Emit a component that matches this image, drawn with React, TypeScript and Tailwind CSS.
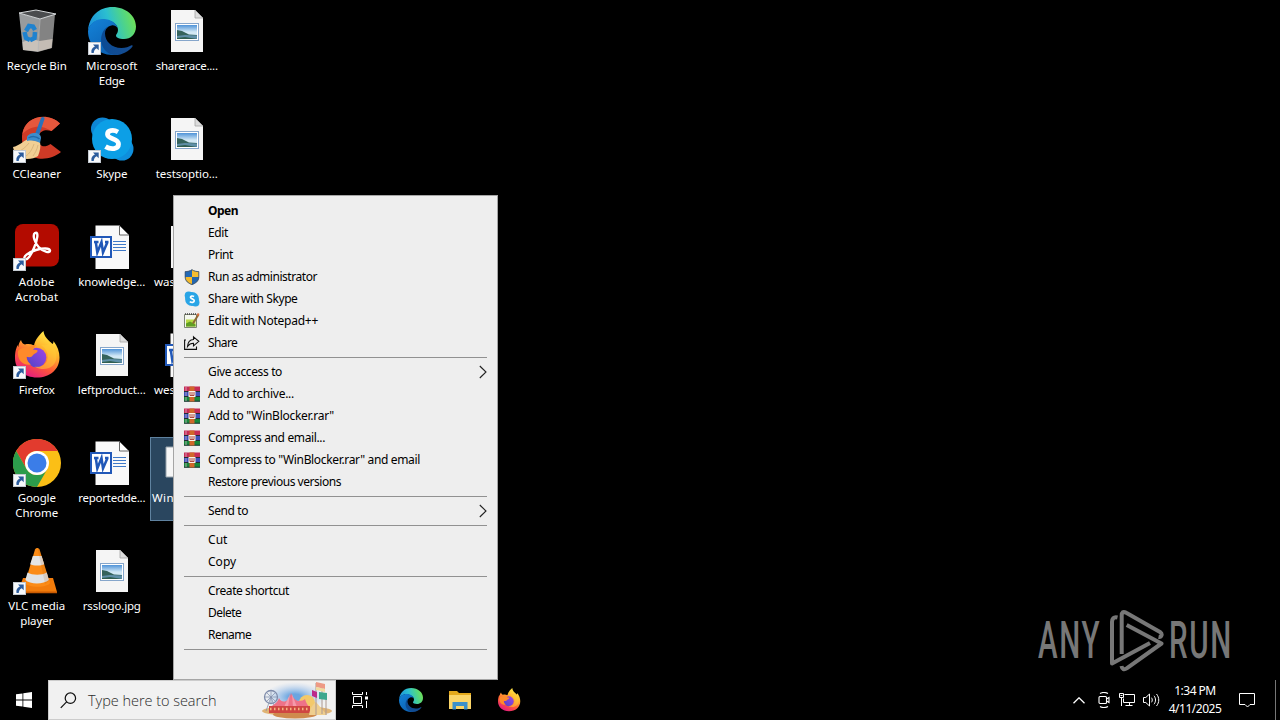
import { useId, useLayoutEffect, useRef, useState } from "react";
import type { ReactNode } from "react";

/** Text whose letter spacing is adjusted so that its layout box is exactly `w` pixels wide. */
function Fit({ text, w, className = "" }: { text: string; w: number; className?: string }) {
  const ref = useRef<HTMLSpanElement>(null);
  const [spacing, setSpacing] = useState(0);
  useLayoutEffect(() => {
    const el = ref.current;
    if (!el) return;
    const natural = parseFloat(getComputedStyle(el).width) - spacing * text.length;
    setSpacing((w - natural) / text.length);
  }, [text, w]);
  return (
    <span ref={ref} className={`inline-block whitespace-pre ${className}`} style={{ letterSpacing: `${spacing}px` }}>
      {text}
    </span>
  );
}

function Shortcut() {
  return (
    <g>
      <rect x="0.5" y="35.5" width="12" height="12" fill="#f7f9fb" stroke="#c3c9d0" />
      <path d="M5 37.5h5.700v5.700l-2-2c-1.800 1-2.800 2.400-3 4.800H3.500C2.800 42.500 4.300 40.500 6.900 39.400z" fill="#2b5c9d" />
    </g>
  );
}

function Svg48({ children, shortcut }: { children: ReactNode; shortcut?: boolean }) {
  return (
    <svg viewBox="0 0 48 48" className="block size-12">
      {children}
      {shortcut && <Shortcut />}
    </svg>
  );
}

function RecycleBin() {
  return (
    <Svg48>
      <path d="M6 6l21 6-2 33-15-2z" fill="#989b9d" />
      <path d="M27 12l15-5-3 34-14 4z" fill="#838383" />
      <path d="M9.500 35l9-3 8 2 13-2-1 9-13.500 3.500L10 43z" fill="#d9cfc4" opacity=".75" />
      <path d="M6 6 23 3l20 4-16 5z" fill="#4a4c4e" stroke="#d4d7d9" strokeWidth="1" />
      <path d="M27 12l-2 32" stroke="#b9bbbc" strokeWidth=".8" />
      <g fill="none" stroke="#1f82cf" strokeWidth="4.500">
        <path d="M13 24l3-5 4 .5 2 3.500" />
        <path d="M22 25l-.5 6-4.500 2.200" />
        <path d="M11.500 25l1.500 6 4 2" />
      </g>
    </Svg48>
  );
}

function EdgeArt() {
  const id = useId();
  return (
    <g>
      <defs>
        <linearGradient id={`${id}a`} x1="0" y1="0.6" x2="1" y2="0.4">
          <stop offset="0" stopColor="#1a8fdc" />
          <stop offset=".45" stopColor="#2bbfd0" />
          <stop offset=".75" stopColor="#4fd488" />
          <stop offset="1" stopColor="#71e054" />
        </linearGradient>
        <linearGradient id={`${id}b`} x1="0" y1="0" x2=".6" y2="1">
          <stop offset="0" stopColor="#1483d8" />
          <stop offset="1" stopColor="#0c62b4" />
        </linearGradient>
        <linearGradient id={`${id}c`} x1="0" y1="0" x2="1" y2="0">
          <stop offset="0" stopColor="#0b4b94" />
          <stop offset="1" stopColor="#164d92" />
        </linearGradient>
      </defs>
      <path d="M0 24C1 9 11 0 24.500 0 38 0 48 9 48 19.500c0 8-5.500 12.500-12 12.500-5 0-8-1.500-8-3.500 0-1.200 2-2.500 2-5.500 0-5-5-9-12-10C9 11.500 2 16 0 24z" fill={`url(#${id}a)`} />
      <path d="M0 24c1.500-8 8-12 15-12 8 0 14 4.500 14.500 9-1.500-2-3.500-3-6-2.500-5 1-8.500 6-8 13 .6 7 5 13.500 13 16.200C13 50 0 39 0 24z" fill={`url(#${id}b)`} />
      <path d="M20 19.500c-2 2-3 4-3 7 0 7.500 6.500 14.500 16.500 14.500 4 0 7.500-1.200 10-2.700.9-.5 1.500.3 1 1.100C41 44.500 33 48.500 26 47.900 15 46 11 35 14 27c1.200-3.500 3.200-6 6-7.500z" fill={`url(#${id}c)`} />
    </g>
  );
}

function FirefoxArt() {
  const id = useId();
  return (
    <g>
      <defs>
        <linearGradient id={`${id}f`} x1=".8" y1="0" x2=".25" y2="1">
          <stop offset="0" stopColor="#fff44f" />
          <stop offset=".35" stopColor="#ffb52d" />
          <stop offset=".65" stopColor="#ff5a36" />
          <stop offset="1" stopColor="#e31587" />
        </linearGradient>
        <linearGradient id={`${id}g`} x1="1" y1="0" x2="0" y2="1">
          <stop offset="0" stopColor="#a044e8" />
          <stop offset="1" stopColor="#4e45c4" />
        </linearGradient>
      </defs>
      <path d="M8 9c1 3 2 4 4 4.500 3-.8 6-.5 9 1C22 9 26 4 30.500 0c.5 6 5 9 9 13 .8-.8 1-1.500 1-3 4 5 6 11 6 16.500 0 12-9.500 20-22.500 20S2 38 2 27c0-6 1-9 2.500-13 .3 1 .5 1.500.8 2C5.500 13 6.500 11 8 9z" fill={`url(#${id}f)`} />
      <circle cx="23.500" cy="26.500" r="9.800" fill={`url(#${id}g)`} />
      <path d="M5 20c3-4 7-3.500 10-3 3-3 5-3.200 8-3l-3 5c4-.5 5 .5 4.500 1.500-.8 1.500-3 2-4.500 3.500-1 2.300-3.500 2.500-6.500 1.800 0 3.200 2 6.200 4.500 7.700C10 35 4 29 5 20z" fill="#ff8a2a" />
      <path d="M28 14c4.500 3 7.500 8 6.500 13.500-1 6-7 9.500-13 8 10 6 22 1 22-10 0-7-4-10-7-14-1.500 3.500-5 2.500-8.500 2.500z" fill="#ffcc38" opacity=".55" />
    </g>
  );
}

function CCleaner() {
  return (
    <Svg48 shortcut>
      <path d="M47 8.500C36-3 9 0 9 23c0 24 26 25 39 14l-10.500-8c-6 4-12 3-12-5 0-8 6-10 13-8z" fill="#cf3a26" />
      <path d="M47 8.500C36-3 12 0 9.500 19c9-9 19-9 29-3z" fill="#e5573c" />
      <path d="M15 24c-5 2-9 7-15 8 1 6 6 11 14 12 5 0 8-1 11-3 2-5 3-10 2-14z" fill="#f1cf94" />
      <path d="M16 28c-3 4-7 7-11 9M21 29c-2 6-5 10-8 12M25 30c-1 5-3 8-5 11" stroke="#d9b67d" fill="none" />
      <path d="M28 3c1-2 4-1 3.500 1L26 20l-4-1z" fill="#2872bb" />
      <path d="M14 22c2-5 14-6 14 1l-1 5c-3-2-8-3-13-2z" fill="#3c8dcc" />
      <path d="M15.500 23c3-2 8-2 11 1" stroke="#216aa9" strokeWidth="1.500" fill="none" />
    </Svg48>
  );
}

function Skype({ small }: { small?: boolean }) {
  const body = (
    <g>
      <circle cx="14.500" cy="14" r="11.500" fill={small ? "#29a5e6" : "#0e86d4"} />
      <circle cx="34" cy="34" r="11.500" fill={small ? "#29a5e6" : "#0f8fdc"} />
      <circle cx="24" cy="24" r="20" fill={small ? "#29a5e6" : "#0c9fe6"} />
      <path d="M30 17c-5-2.800-10.500-1.500-10.500 2.300 0 5 11 3.700 11 9.700 0 5.200-7.500 6-13 2.600" fill="none" stroke="#fff" strokeWidth="4.800" />
    </g>
  );
  return small ? <svg viewBox="1 1 46 46" className="block size-4">{body}</svg> : <Svg48 shortcut>{body}</Svg48>;
}

function Acrobat() {
  return (
    <Svg48 shortcut>
      <rect x="2" y="1" width="44" height="42.500" rx="8" fill="#b30b00" />
      <path
        d="M22 10c4-2 2.500 7-1 15-3 7-6.500 12.500-9 11-2.500-2 3-6.500 11-9 7-2 13.500-2 14 .5.200 3-6 1.500-11-3-4-4-7-12.500-4-14.500z"
        fill="none"
        stroke="#fff"
        strokeWidth="2.400"
      />
    </Svg48>
  );
}

function Chrome() {
  return (
    <Svg48 shortcut>
      <circle cx="24" cy="24" r="24" fill="#fbbf16" />
      <path d="M24 12h20.800A24 24 0 0 0 3.200 12l10.400 18A12 12 0 0 1 24 12z" fill="#e23b2e" />
      <path d="M3.200 12A24 24 0 0 0 24 48l10.400-18a12 12 0 0 1-20.800 0z" fill="#2c9c4b" />
      <circle cx="24" cy="24" r="12" fill="#fff" />
      <circle cx="24" cy="24" r="9.500" fill="#3b7de8" />
    </Svg48>
  );
}

function Vlc() {
  return (
    <Svg48 shortcut>
      <path d="M10 31h30l4 14H5z" fill="#f27c0b" />
      <path d="M5 44.500h39v1.800H5z" fill="#c95b02" />
      <path d="M22 2.500c1-2 3.500-2 4.500 0L37 36c-3 5-22 5-25 0z" fill="#fb8b16" />
      <path d="M19.800 9h8.800l2.600 8.200c-3 1.700-11 1.700-14 0z" fill="#e4e5e6" />
      <path d="M14.500 25.500c5 3 14.500 3 19.300 0l2 7.500c-5 4.500-19 4.500-23.400 0z" fill="#e0e2e3" />
      <path d="M24.500 1l2 1 9.500 32-4 3z" fill="#a75100" opacity=".15" />
    </Svg48>
  );
}

function ImageFile() {
  const id = useId();
  return (
    <Svg48>
      <defs>
        <linearGradient id={id} x1="0" y1="0" x2="0" y2="1">
          <stop offset="0" stopColor="#4f93d8" />
          <stop offset="0.5" stopColor="#d2e8f5" />
        </linearGradient>
      </defs>
      <path d="M8 3h24l8 8v34H8z" fill="#f5f5f5" />
      <path d="M32 3v8h8z" fill="#dcdcdc" stroke="#a3a3a3" strokeWidth=".8" />
      <rect x="12.500" y="16.500" width="23" height="17" fill="#fff" stroke="#86a6cb" />
      <rect x="14" y="18" width="20" height="14" fill={`url(#${id})`} />
      <path d="M14 23l5 1 7 3.500 8 .5v4H14z" fill="#35635c" />
      <path d="M14 29l8-1 12 .5V32H14z" fill="#5f8fa8" />
      <path d="M14 31l8-1 12 2H14z" fill="#2f5e50" />
    </Svg48>
  );
}

function WordFile() {
  return (
    <Svg48>
      <path d="M7.500 2.500h24l9.500 9.500v34H7.500z" fill="#f9f9f9" />
      <path d="M31.500 2.500V12H41z" fill="#fff" stroke="#666" strokeWidth="1" />
      <path d="M25 18.500h13M25 21.500h13M25 24.500h13M25 27.500h13" stroke="#3f79c8" />
      <rect x="2" y="13" width="22" height="22" fill="#2158b8" />
      <rect x="4" y="15" width="18" height="18" fill="#fff" />
      <path d="M6 19h4.500M7.800 19l1.500 10.500L13.500 19l1.500 10.500L19.500 19M17 19h3.500" fill="none" stroke="#2158b8" strokeWidth="2.500" />
    </Svg48>
  );
}

function BlankFile() {
  return (
    <Svg48>
      <path d="M3 8h42v30H3z" fill="#f6f6f6" stroke="#98a3ac" />
    </Svg48>
  );
}

type DeskItem = { icon: ReactNode; lines: [string, number][]; selected?: boolean; start?: boolean } | null;

const columns: DeskItem[][] = [
  [
    { icon: <RecycleBin />, lines: [["Recycle Bin", 60]] },
    { icon: <CCleaner />, lines: [["CCleaner", 48.5]] },
    { icon: <Acrobat />, lines: [["Adobe", 36], ["Acrobat", 43]] },
    { icon: <Svg48 shortcut><FirefoxArt /></Svg48>, lines: [["Firefox", 36]] },
    { icon: <Chrome />, lines: [["Google", 38], ["Chrome", 43]] },
    { icon: <Vlc />, lines: [["VLC media", 57], ["player", 33]] },
  ],
  [
    { icon: <Svg48 shortcut><EdgeArt /></Svg48>, lines: [["Microsoft", 51.5], ["Edge", 26]] },
    { icon: <Skype />, lines: [["Skype", 31]] },
    { icon: <WordFile />, lines: [["knowledge...", 67]] },
    { icon: <ImageFile />, lines: [["leftproduct...", 68]] },
    { icon: <WordFile />, lines: [["reportedde...", 67]] },
    { icon: <ImageFile />, lines: [["rsslogo.jpg", 58]] },
  ],
  [
    { icon: <ImageFile />, lines: [["sharerace....", 62]] },
    { icon: <ImageFile />, lines: [["testsoptio...", 62]] },
    { icon: <ImageFile />, lines: [["was", 21]], start: true },
    { icon: <WordFile />, lines: [["wes", 21]], start: true },
    { icon: <BlankFile />, lines: [["Win", 22]], start: true, selected: true },
    null,
  ],
];

function Desktop() {
  return (
    <div className="flex pt-[5px] text-white">
      {columns.map((items, c) => (
        <div key={c} className="flex w-[75px] flex-col">
          {items.map((item, r) => (
            <div key={r} className="h-[108px]">
              {item && (
                <div className={`h-[84px] w-[75px] border pt-px ${item.selected ? "border-[#5f829f] bg-[#2a465f]" : "border-transparent"}`}>
                  <div className="pl-3">{item.icon}</div>
                  <div
                    className={`flex flex-col pt-[3px] text-[11.5px] leading-[15px] ${
                      item.start ? (item.selected ? "items-start pl-px" : "items-start pl-[3px]") : "items-center pr-[1.5px]"
                    }`}
                  >
                    {item.lines.map(([text, w]) => (
                      <Fit key={text} text={text} w={w} />
                    ))}
                  </div>
                </div>
              )}
            </div>
          ))}
        </div>
      ))}
    </div>
  );
}

function Shield() {
  return (
    <svg viewBox="0 0 16 16" className="block size-4">
      <path d="M8 .5C6 2 3.500 2.500 1 2.500V8c0 4 3.500 6.500 7 7.700z" fill="#2369b5" />
      <path d="M8 .5c2 1.500 4.500 2 7 2V8c0 4-3.500 6.500-7 7.700z" fill="#f5bd31" />
      <path d="M1 8h7v7.700C4.500 14.500 1 12 1 8z" fill="#f3b92b" />
      <path d="M8 8h7c0 4-3.500 6.500-7 7.700z" fill="#2366ae" />
      <path d="M8 .7C6 2.200 3.500 2.600 1.200 2.600V8c0 4 3.300 6.300 6.800 7.500 3.500-1.200 6.800-3.500 6.800-7.500V2.600C12.500 2.600 10 2.200 8 .7z" fill="none" stroke="#3b5270" strokeWidth=".9" />
    </svg>
  );
}

function NotepadIcon() {
  return (
    <svg viewBox="0 0 16 16" className="block size-4">
      <path d="M.5 1.500h12v13H.5z" fill="#f5f8ee" stroke="#7d8473" />
      <path d="M1 1h11" stroke="#444" strokeWidth="1.500" strokeDasharray="1 1" />
      <path d="M2 6.500h9.500v7H2z" fill="#b9da45" />
      <path d="M2 10.500l4-2 5.500 3v2H2z" fill="#609e23" />
      <path d="M14.500 1.500l-5.500 9" stroke="#8b6a32" strokeWidth="2" />
      <path d="M14.700.5l-1.400 2.300" stroke="#d86e3c" strokeWidth="2" />
    </svg>
  );
}

function ShareIcon() {
  return (
    <svg viewBox="0 0 16 16" className="block size-4" fill="none" stroke="#111" strokeWidth="1.100">
      <path d="M2 5H.6v9.400h11.900v-2.900" />
      <path d="M9.500 1.800l5.300 4.500-5.300 4.500V8.300C6.500 8.300 5 9.300 3.500 11.500c.3-4 2.300-6.800 6-7z" />
    </svg>
  );
}

function RarIcon() {
  return (
    <svg viewBox="0 0 16 16" className="block size-4">
      <rect width="16" height="5" y=".5" fill="#c62c56" />
      <rect width="16" height="5" y="5.500" fill="#3a4fb8" />
      <rect width="16" height="5" y="10.500" fill="#16873a" />
      <path d="M0 5.500h16M0 10.500h16M0 15.200h16" stroke="#222c35" />
      <path d="M2 1v4M2 6v4M2 11v4" stroke="#dfc3d4" strokeWidth=".7" />
      <rect x="5.500" y=".5" width="5" height="15" fill="#d0672a" />
      <rect x="4.500" y="5" width="7" height="6" fill="#fbf2ea" />
      <path d="M6 6v3.500h4V6M8 6v3" fill="none" stroke="#a53530" strokeWidth=".9" />
    </svg>
  );
}

type Entry = { text: string; w: number; icon?: ReactNode; bold?: boolean; sub?: boolean };

const groups: Entry[][] = [
  [
    { text: "Open", w: 30, bold: true },
    { text: "Edit", w: 20 },
    { text: "Print", w: 25 },
    { text: "Run as administrator", w: 109, icon: <Shield /> },
    { text: "Share with Skype", w: 89.5, icon: <Skype small /> },
    { text: "Edit with Notepad++", w: 110, icon: <NotepadIcon /> },
    { text: "Share", w: 29.2, icon: <ShareIcon /> },
  ],
  [
    { text: "Give access to", w: 74, sub: true },
    { text: "Add to archive...", w: 86, icon: <RarIcon /> },
    { text: 'Add to "WinBlocker.rar"', w: 126, icon: <RarIcon /> },
    { text: "Compress and email...", w: 117, icon: <RarIcon /> },
    { text: 'Compress to "WinBlocker.rar" and email', w: 212, icon: <RarIcon /> },
    { text: "Restore previous versions", w: 133 },
  ],
  [{ text: "Send to", w: 40, sub: true }],
  [{ text: "Cut", w: 19.5 }, { text: "Copy", w: 28.2 }],
  [{ text: "Create shortcut", w: 81 }, { text: "Delete", w: 33.2 }, { text: "Rename", w: 43.2 }],
];

function ContextMenu() {
  return (
    <div className="absolute top-[195px] left-[173px] h-[485px] w-[325px] border border-[#a5a5a5] bg-[#eeeeee] py-1 text-[12px] text-black">
      {groups.map((group, g) => (
        <div key={g}>
          {group.map((e) => (
            <div key={e.text} className="flex h-[22px] items-center pr-[10px] pl-[10px]">
              <div className="w-6 shrink-0">{e.icon}</div>
              <Fit text={e.text} w={e.w} className={`leading-[22px] ${e.bold ? "font-bold" : ""}`} />
              {e.sub && (
                <svg viewBox="0 0 8 14" className="ml-auto h-[14px] w-2" fill="none" stroke="#222" strokeWidth="1.100">
                  <path d="M.8 1l6.200 6-6.200 6" />
                </svg>
              )}
            </div>
          ))}
          <div className="mx-[10px] my-[3px] h-px bg-[#919191]" />
        </div>
      ))}
    </div>
  );
}

function Watermark() {
  return (
    <div className="absolute top-[609px] left-[1038px] flex h-[64px] w-[196px] items-center text-[#777777]">
      <div className="w-[70px]">
        <Fit text="ANY" w={109} className="origin-left scale-x-[0.58] font-['Roboto'] text-[51px] leading-[68px] font-medium" />
      </div>
      <svg viewBox="0 0 56 64" className="h-16 w-14 shrink-0" fill="none" stroke="#777777" strokeWidth="4" strokeLinejoin="round">
        <path d="M9.500 8.500C5.500 7.500 4 10 4 13v41.500L42 34" />
        <path d="M13.700 45V7c0-4 1.500-5 4.500-3.200L52 23c3 2 1.500 5.500-1.500 5" />
        <path d="M18.700 16L53.500 34.500 19 59.200c-3 2-5 1-5.500-2.200" />
      </svg>
      <div className="w-[60px] pl-[5px]">
        <Fit text="RUN" w={110} className="origin-left scale-x-[0.58] font-['Roboto'] text-[51px] leading-[68px] font-medium" />
      </div>
    </div>
  );
}

function Carnival() {
  return (
    <svg viewBox="0 0 74 38" className="block h-[38px] w-[74px]">
      <defs>
        <radialGradient id="sky">
          <stop offset=".2" stopColor="#6aa5e0" />
          <stop offset="1" stopColor="#b4cdf0" stopOpacity="0" />
        </radialGradient>
      </defs>
      <ellipse cx="34" cy="16" rx="31" ry="15" fill="url(#sky)" />
      <ellipse cx="36" cy="30" rx="35" ry="5" fill="#e0b475" />
      <ellipse cx="34" cy="33.500" rx="22" ry="4" fill="#cf8a4d" />
      <circle cx="46" cy="22" r="8" fill="#f3c96a" />
      <g fill="none" stroke="#7f8cab">
        <circle cx="10" cy="16" r="6.500" strokeWidth="1.300" />
        <path d="M10 9v14M3 16h14M5 11l10 10M15 11L5 21M10 16l-5 14M10 16l5 14" strokeWidth=".7" />
      </g>
      <path d="M8 26c6-2 9-6 10-9 2 4 5 4 7 3 3-1 4-4 5-8 2 5 4 7 7 8 4 0 6-1 7-2 1 4 3 7 5 8z" fill="#ee7288" />
      <path d="M29 13l-6 13h4zM31 13l1 13h4z" fill="#f59aab" />
      <path d="M8 25h41v7H8z" fill="#cf4642" />
      <path d="M9 28h39" stroke="#f5b57e" strokeWidth="2.500" strokeDasharray="1.500 2.500" />
      <path d="M48 34c1-7 4-11 7-13l11 13z" fill="#efce8e" />
      <path d="M55 2v32M61 7v26M65 12v22" stroke="#ab9890" />
      <path d="M55 1l9 2v5l-9-2z" fill="#ee9a85" />
      <path d="M51 9l5 2v6l-5-2z" fill="#bd298b" />
      <path d="M58 11l8 1v7l-8-1z" fill="#3ca78e" />
      <path d="M55 6l9 2v3l-9-2z" fill="#f0dca0" />
    </svg>
  );
}

function Taskbar() {
  return (
    <div className="absolute inset-x-0 bottom-0 flex h-10 items-center bg-black text-white">
      <div className="flex w-12 justify-center">
        <svg viewBox="0 0 16 16" className="size-4" fill="#fff">
          <path d="M0 2.300L6.500 1.400v6.200H0zM7.300 1.300L16 0v7.600H7.300zM0 8.400h6.500v6.200L0 13.700zM7.300 8.400H16V16l-8.700-1.300z" />
        </svg>
      </div>
      <div className="flex h-10 w-[288px] items-center border border-[#cccccc] bg-[#f1f1f1] pl-[11px] text-[#2b2b2b]">
        <svg viewBox="0 0 18 18" className="size-[17px]" fill="none" stroke="#111" strokeWidth="1.300">
          <circle cx="11" cy="6.500" r="5.500" />
          <path d="M7 10.500L.8 16.800" />
        </svg>
        <Fit text="Type here to search" w={128.5} className="ml-[11px] pt-px font-['Open_Sans'] text-[14.5px] font-light" />
        <div className="ml-auto">
          <Carnival />
        </div>
      </div>
      <div className="flex w-12 justify-center">
        <svg viewBox="0 0 16 16" className="size-4" fill="none" stroke="#fff">
          <path d="M.5 0v2.500h10V0M1.500 4.500h8v7h-8zM.5 16v-2.500h10V16M14.500 0v3M14.500 9v7" />
          <path d="M13 4.500h3v3h-3z" fill="#fff" stroke="none" />
        </svg>
      </div>
      <div className="flex w-[49px] justify-center pl-[5px]">
        <svg viewBox="0 0 48 48" className="size-6"><EdgeArt /></svg>
      </div>
      <div className="flex w-[49px] justify-center pl-[5px]">
        <svg viewBox="0 0 22 20" className="h-5 w-[22px]">
          <path d="M0 1h8l2 2h12v16H0z" fill="#e4a91b" />
          <path d="M0 5h22v14H0z" fill="#fbd568" />
          <path d="M3.500 12h15v7.500H15V16H7v3.500H3.500z" fill="#3b90ca" />
        </svg>
      </div>
      <div className="flex w-[49px] justify-center pl-[5px]">
        <svg viewBox="0 0 48 48" className="size-6"><FirefoxArt /></svg>
      </div>
      <div className="ml-auto flex items-center">
        <svg viewBox="0 0 12 7" className="mr-[13px] h-[7px] w-3" fill="none" stroke="#fff" strokeWidth="1.300">
          <path d="M.5 6.300L6 .8l5.500 5.500" />
        </svg>
        <svg viewBox="0 0 12 16" className="mr-[9px] h-4 w-3" fill="none" stroke="#fff" strokeWidth="1.100">
          <rect x="1" y="4.500" width="7.500" height="7" rx="1" />
          <path d="M8.500 7l2.500-1.500v5L8.500 9M2 1.500c2-1.200 5.500-1.200 8 0M2 14.500c2 1.200 5.500 1.200 8 0" />
        </svg>
        <svg viewBox="0 0 17 16" className="mr-[7px] h-4 w-[17px]" fill="none" stroke="#fff">
          <path d="M5.500 2.500h10v8H4.500v-4M10.500 10.500v3M6.500 13.500h7M.5 1.500h4v4h-4zM2.500 5.500v8.500M1.500 3.500h2" />
        </svg>
        <svg viewBox="0 0 17 16" className="mr-[8px] h-4 w-[17px]" fill="none" stroke="#fff">
          <path d="M.5 5.500h2.300L6.500 2v12l-3.700-3.500H.5zM8.500 5.700c1 1.400 1 3.200 0 4.600M11 3.800c2 2.500 2 6 0 8.400M13.500 2c3 3.700 3 8.300 0 12" />
        </svg>
        <div className="flex w-[54px] flex-col items-center text-[12px] leading-[18px]">
          <Fit text="1:34 PM" w={41.5} />
          <Fit text="4/11/2025" w={52.5} />
        </div>
        <svg viewBox="0 0 16 16" className="mr-5 ml-[17px] size-4" fill="none" stroke="#fff">
          <path d="M.5 1.500h15v11H11l-2.500 2.500L6 12.500H.5z" />
        </svg>
        <div className="mr-1 h-10 w-px bg-[#777777]" />
      </div>
    </div>
  );
}

export default function App() {
  return (
    <div className="relative h-[720px] w-[1280px] overflow-hidden bg-black font-['Noto_Sans','Open_Sans',sans-serif]">
      <Desktop />
      <Watermark />
      <ContextMenu />
      <Taskbar />
    </div>
  );
}
